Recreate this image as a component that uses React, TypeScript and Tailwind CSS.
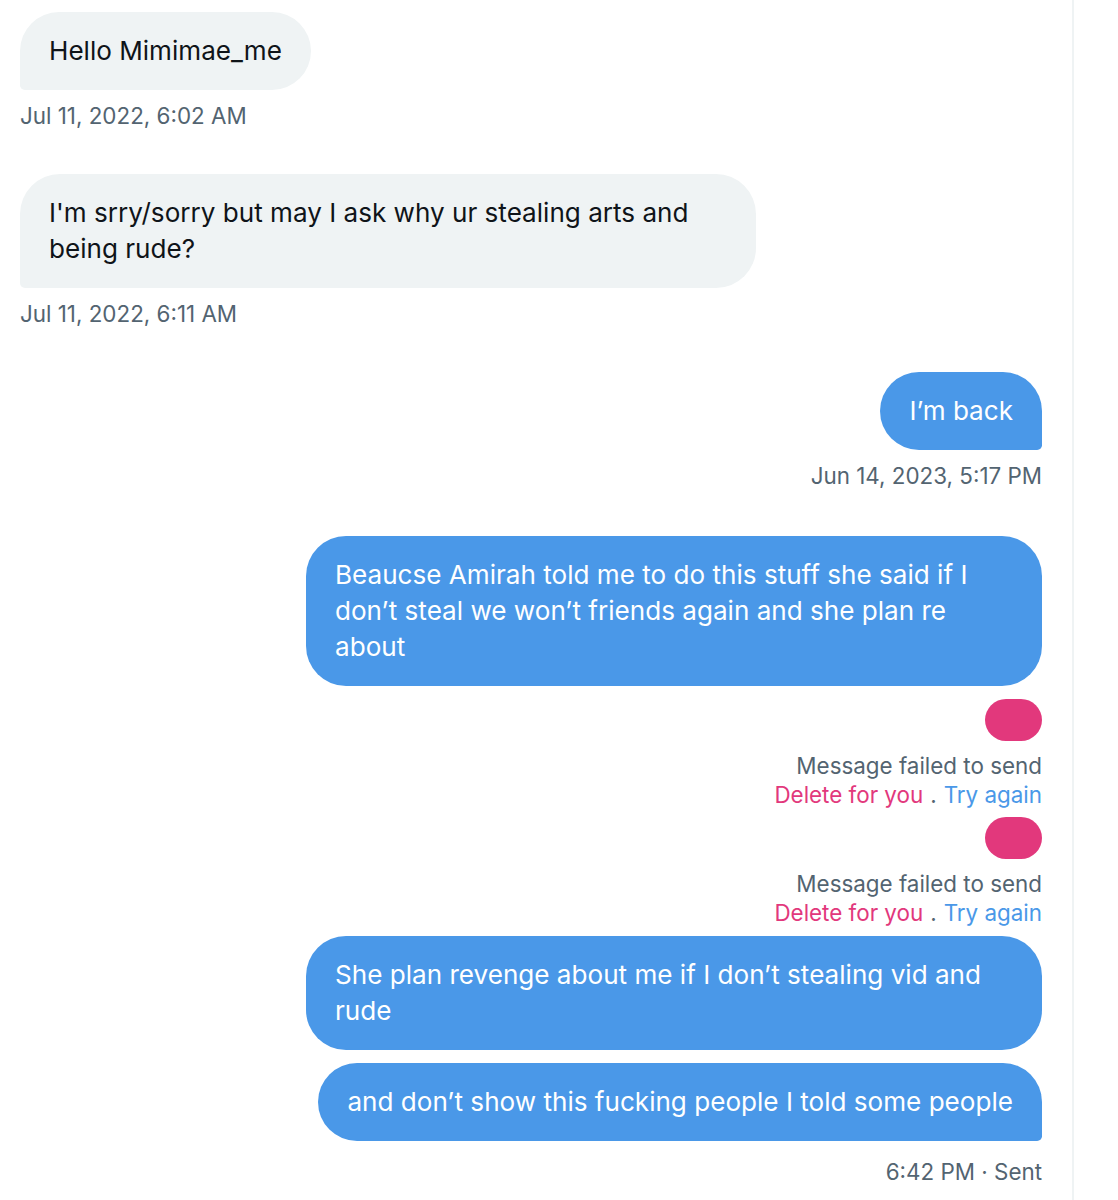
import React from 'react';

const FONT = { fontFamily: 'Inter, "Noto Sans", sans-serif' };

function Received({ text, time, first }: { text: string; time: string; first?: boolean }) {
  return (
    <div className={`flex flex-col items-start ${first ? '' : 'mt-[44px]'}`}>
      <div className="max-w-[736px] rounded-[40px] rounded-bl-[5px] bg-[#eff3f4] px-[29px] py-[21px] text-[26.1px] leading-[36px] text-[#0f1419]">
        {text}
      </div>
      <div className="mt-[11px] text-[22.4px] leading-[29px] text-[#536471]">{time}</div>
    </div>
  );
}

function Sent({ text, tail, className = '' }: { text: string; tail?: boolean; className?: string }) {
  return (
    <div
      className={`max-w-[736px] rounded-[40px] bg-[#4a98e8] px-[29px] py-[21px] text-[26.1px] leading-[36px] text-white ${tail ? 'rounded-br-[5px]' : ''} ${className}`}
    >
      {text}
    </div>
  );
}

function Failed({ className = '' }: { className?: string }) {
  return (
    <div className={`flex flex-col items-end ${className}`}>
      <div className="h-[42px] w-[57px] rounded-full bg-[#e2387c]" />
      <div className="mt-[10px] text-[22.4px] leading-[29px] text-[#536471]">Message failed to send</div>
      <div className="flex items-center text-[22.4px] leading-[29px]">
        <span className="text-[#e2387c]">Delete for you</span>
        <span className="mx-[7px] text-[#536471]">.</span>
        <span className="text-[#4a98e8]">Try again</span>
      </div>
    </div>
  );
}

export default function App() {
  return (
    <div className="h-[1200px] w-[1118px] overflow-hidden bg-white" style={FONT}>
      <div className="h-full w-[1074px] border-r-2 border-[#eff3f4] pl-[20px] pr-[30px] pt-[12px]">
        <Received first text="Hello Mimimae_me" time="Jul 11, 2022, 6:02 AM" />
        <Received
          text="I'm srry/sorry but may I ask why ur stealing arts and being rude?"
          time="Jul 11, 2022, 6:11 AM"
        />

        <div className="mt-[44px] flex flex-col items-end">
          <Sent tail text="I’m back" />
          <div className="mt-[11px] text-[22.4px] leading-[29px] text-[#536471]">Jun 14, 2023, 5:17 PM</div>

          <Sent
            className="mt-[46px]"
            text="Beaucse Amirah told me to do this stuff she said if I don’t steal we won’t friends again and she plan re about"
          />
          <Failed className="mt-[13px]" />
          <Failed className="mt-[8px]" />
          <Sent className="mt-[9px]" text="She plan revenge about me if I don’t stealing vid and rude" />
          <Sent tail className="mt-[13px]" text="and don’t show this fucking people I told some people" />
          <div className="mt-[16px] text-[22.4px] leading-[29px] text-[#536471]">6:42 PM · Sent</div>
        </div>
      </div>
    </div>
  );
}
